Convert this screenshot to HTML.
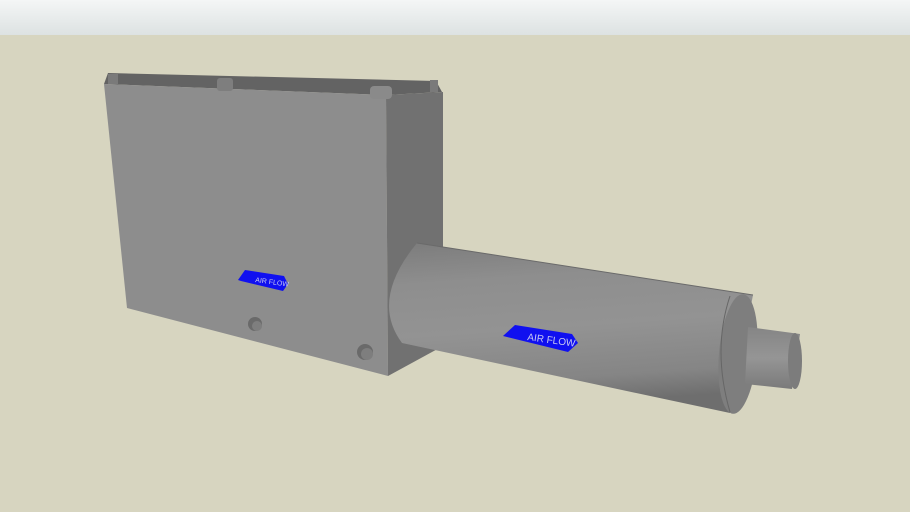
<!DOCTYPE html>
<html><head><style>html,body{margin:0;padding:0;width:910px;height:512px;overflow:hidden;background:#d7d5c0}</style></head>
<body>
<svg width="910" height="512" viewBox="0 0 910 512" xmlns="http://www.w3.org/2000/svg">
<defs>
<linearGradient id="sky" x1="0" y1="0" x2="0" y2="1"><stop offset="0" stop-color="#f4f6f6"/><stop offset="1" stop-color="#dde2e2"/></linearGradient>
<linearGradient id="cyl" x1="0" y1="0" x2="0.15" y2="1"><stop offset="0" stop-color="#7c7c7c"/><stop offset="0.25" stop-color="#8e8e8e"/><stop offset="0.55" stop-color="#939393"/><stop offset="0.85" stop-color="#858585"/><stop offset="1" stop-color="#6e6e6e"/></linearGradient>
<linearGradient id="cyl2" x1="0" y1="0" x2="0" y2="1"><stop offset="0" stop-color="#858585"/><stop offset="0.5" stop-color="#959595"/><stop offset="1" stop-color="#7a7a7a"/></linearGradient>
</defs>
<rect width="910" height="512" fill="#d7d5c0"/>
<rect width="910" height="35" fill="url(#sky)"/>
<polygon points="108,73 436,81 442,92 386,95 104,84" fill="#636363"/>
<polygon points="104,84 386,95 388,376 127,308" fill="#8d8d8d"/>
<polygon points="386,95 443,92 443,346 388,376" fill="#717171"/>
<rect x="217" y="78" width="16" height="13" rx="3" fill="#7e7e7e"/>
<rect x="370" y="86" width="22" height="13" rx="4" fill="#8a8a8a"/>
<rect x="108" y="74" width="10" height="10" fill="#7a7a7a"/>
<rect x="430" y="80" width="8" height="12" fill="#7a7a7a"/>
<circle cx="255" cy="324" r="7" fill="#6a6a6a"/><circle cx="257" cy="326" r="5" fill="#7e7e7e"/>
<circle cx="365" cy="352" r="8" fill="#6a6a6a"/><circle cx="367" cy="354" r="6" fill="#7e7e7e"/>
<polygon points="245,270 284,276 288,284 283,291 241,281 238,280" fill="#1010f0"/>
<text x="255" y="282" font-family="Liberation Sans,sans-serif" font-size="7" fill="#c8c8f0" transform="rotate(8 255 282)">AIR FLOW</text>
<path d="M417,243 L753,295 L730,413 L402,343 Q370,300 417,243 Z" fill="url(#cyl)"/>
<path d="M417,243 L753,295" stroke="#6a6a6a" stroke-width="1" fill="none"/>
<ellipse cx="738" cy="354" rx="19" ry="60" fill="#7e7e7e" transform="rotate(5 738 354)"/>
<path d="M730,296 Q712,350 730,412" stroke="#666" fill="none"/>
<path d="M748,327 L800,334 L792,389 L745,384 Z" fill="url(#cyl2)"/>
<ellipse cx="795" cy="361" rx="7" ry="28" fill="#7c7c7c"/>
<polygon points="515,325 572,334 578,343 568,352 503,336" fill="#1010f0"/>
<text x="527" y="340" font-family="Liberation Sans,sans-serif" font-size="10" fill="#c8c8f0" transform="rotate(8 527 340)">AIR FLOW</text>
</svg>
</body></html>
